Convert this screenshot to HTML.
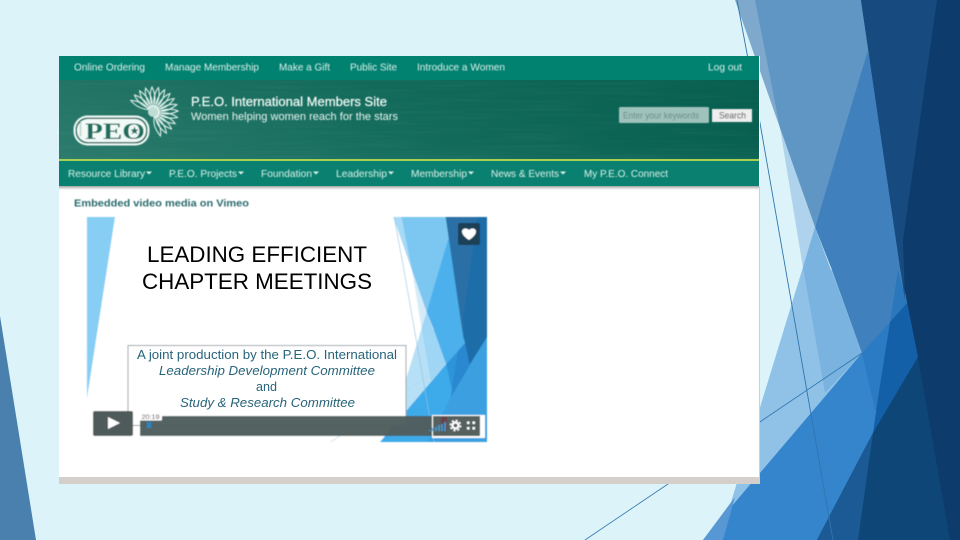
<!DOCTYPE html>
<html lang="en"><head><meta charset="utf-8"><title>P.E.O. Leadership Slide</title>
<style>
html,body{margin:0;padding:0;background:#DCF4F9;width:960px;height:540px;overflow:hidden}
svg{display:block;font-family:"Liberation Sans",Arial,sans-serif}
</style></head><body>
<svg width="960" height="540" viewBox="0 0 960 540" xmlns="http://www.w3.org/2000/svg">
<defs>
<filter id="b" x="-5%" y="-5%" width="110%" height="110%"><feGaussianBlur stdDeviation="0.42"/></filter>
<filter id="b2" x="-5%" y="-5%" width="110%" height="110%"><feGaussianBlur stdDeviation="0.45"/></filter>
<filter id="wave" x="0" y="0" width="100%" height="100%"><feTurbulence type="fractalNoise" baseFrequency="0.012 0.35" numOctaves="2" seed="4"/><feColorMatrix values="0 0 0 0 1  0 0 0 0 1  0 0 0 0 1  1.1 0 0 0 -0.45"/></filter>
<linearGradient id="ban" x1="0" y1="0" x2="1" y2="0"><stop offset="0" stop-color="#2A7A6B"/><stop offset=".45" stop-color="#156D5E"/><stop offset="1" stop-color="#075F50"/></linearGradient>
<linearGradient id="ban2" x1="0" y1="0" x2="0" y2="1"><stop offset="0" stop-color="#0A5F50" stop-opacity=".25"/><stop offset=".7" stop-color="#0A5F50" stop-opacity="0"/><stop offset="1" stop-color="#4A9484" stop-opacity=".12"/></linearGradient>
<linearGradient id="sh" x1="0" y1="0" x2="0" y2="1"><stop offset="0" stop-color="#555" stop-opacity=".55"/><stop offset="1" stop-color="#777" stop-opacity="0"/></linearGradient>
<path id="petal" d="M0-5C-3.600-12-3.400-20-1-25C1.400-20 3.600-12 0-5Z" fill="none" stroke="#EFFAF6" stroke-width="1"/>
</defs>

<rect width="960" height="540" fill="#DCF4F9"/>
<!-- slide decoration -->
<polygon points="0,316 36,540 0,540" fill="#4A80AE"/>
<polygon points="780,128 815,227 803,268" fill="#AFD3EC"/>
<polygon points="803,267 832,270 880,353 760,480 728,512" fill="#90C2E8"/>
<polygon points="803,267 815,227 862,353 825,393" fill="#7AB3E0"/>
<polygon points="735,0 756,0 790,150 780,128" fill="#7EA9CC"/>
<polygon points="755,0 875,0 875,30 815,227 780,128" fill="#6096C4"/>
<polygon points="868,50 910,270 910,330 878,398 862,353 832,270 815,227" fill="#4080BC"/>
<polygon points="703,540 862,353 880,353 890,433 840,540" fill="#3585CC"/>
<polygon points="723,540 735,497 703,540" fill="#5798D4"/>
<polygon points="862,353 891,321 885,410 875,410" fill="#2A7BC4"/>
<polygon points="898,270 907,303 890,322" fill="#2A78BB"/>
<polygon points="890,322 907,303 925,357 873,433 878,398" fill="#1460A8"/>
<polygon points="861,0 960,0 960,540 817,540 873,433 918,357 900,267" fill="#0C3B6C"/>
<polygon points="861,0 937,0 903,240 905,300 900,267" fill="#174B80"/>
<polygon points="918,357 950,540 817,540 873,433" fill="#0E4678"/>
<polygon points="873,433 858,540 817,540" fill="#1B5A94"/>
<polyline points="737,0 760,123 833,540" fill="none" stroke="#2E75B0" stroke-width=".9"/>
<line x1="585" y1="540" x2="862" y2="353" stroke="#2E75B0" stroke-width=".8"/>

<!-- screenshot card -->
<rect x="59" y="56" width="701" height="428" fill="#fff"/>
<rect x="759" y="186" width="1" height="292" fill="#CFCFCF"/>
<rect x="59" y="477" width="701" height="7" fill="#D5CFCB"/>
<rect x="59" y="56" width="700" height="24" fill="#018170"/>
<rect x="59" y="80" width="700" height="80" fill="url(#ban)"/>
<rect x="59" y="80" width="700" height="80" fill="url(#ban2)"/>
<rect x="59" y="80" width="700" height="80" filter="url(#wave)" opacity=".06"/>
<rect x="59" y="186" width="700" height="4" fill="url(#sh)"/>
<rect x="59" y="161" width="700" height="25" fill="#0A8170"/>
<rect x="59" y="159" width="700" height="2" fill="#A8D050"/>

<g filter="url(#b)">
<g fill="#DDF2EC" font-size="10.5">
<text x="74" y="70.5" textLength="71" lengthAdjust="spacingAndGlyphs">Online Ordering</text>
<text x="165" y="70.5" textLength="94" lengthAdjust="spacingAndGlyphs">Manage Membership</text>
<text x="279" y="70.5" textLength="51" lengthAdjust="spacingAndGlyphs">Make a Gift</text>
<text x="350" y="70.5" textLength="47" lengthAdjust="spacingAndGlyphs">Public Site</text>
<text x="417" y="70.5" textLength="88" lengthAdjust="spacingAndGlyphs">Introduce a Women</text>
<text x="708" y="70.5" textLength="34" lengthAdjust="spacingAndGlyphs">Log out</text>
</g>
<text x="191" y="106" fill="#F2FAF7" font-size="12.5" textLength="196" lengthAdjust="spacingAndGlyphs" stroke="#F2FAF7" stroke-width=".25">P.E.O. International Members Site</text>
<text x="191" y="120" fill="#EAF6F2" font-size="11" textLength="207" lengthAdjust="spacingAndGlyphs">Women helping women reach for the stars</text>

<rect x="619" y="107" width="90" height="16" rx="1.5" fill="#9FC3BC"/>
<text x="623" y="118.5" fill="#688B85" font-size="9.5" textLength="76" lengthAdjust="spacingAndGlyphs">Enter your keywords</text>
<rect x="712" y="109" width="40" height="13" fill="#EEEEEE"/>
<text x="719" y="118.5" fill="#444" font-size="9.5" textLength="27" lengthAdjust="spacingAndGlyphs">Search</text>

<g fill="#DDF2EC" font-size="10.5">
<text x="68" y="177" textLength="77" lengthAdjust="spacingAndGlyphs">Resource Library</text>
<text x="169" y="177" textLength="68" lengthAdjust="spacingAndGlyphs">P.E.O. Projects</text>
<text x="261" y="177" textLength="51" lengthAdjust="spacingAndGlyphs">Foundation</text>
<text x="336" y="177" textLength="51" lengthAdjust="spacingAndGlyphs">Leadership</text>
<text x="411" y="177" textLength="56" lengthAdjust="spacingAndGlyphs">Membership</text>
<text x="491" y="177" textLength="68" lengthAdjust="spacingAndGlyphs">News &amp; Events</text>
<text x="584" y="177" textLength="84" lengthAdjust="spacingAndGlyphs">My P.E.O. Connect</text>
<path d="M146 171.5h6l-3 3zM238 171.5h6l-3 3zM313 171.5h6l-3 3zM388 171.5h6l-3 3zM468 171.5h6l-3 3zM560 171.5h6l-3 3z"/>
</g>
<text x="74" y="206.500" fill="#2B6A6C" font-size="10.5" font-weight="bold" textLength="175" lengthAdjust="spacingAndGlyphs">Embedded video media on Vimeo</text>
</g>

<!-- logo -->
<g filter="url(#b)">
<g transform="translate(153 112)">
<use href="#petal" transform="rotate(-60)"/><use href="#petal" transform="rotate(-45)"/><use href="#petal" transform="rotate(-30)"/><use href="#petal" transform="rotate(-15)"/><use href="#petal"/><use href="#petal" transform="rotate(15)"/><use href="#petal" transform="rotate(30)"/><use href="#petal" transform="rotate(45)"/><use href="#petal" transform="rotate(60)"/><use href="#petal" transform="rotate(75)"/><use href="#petal" transform="rotate(90)"/><use href="#petal" transform="rotate(105)"/><use href="#petal" transform="rotate(120)"/><use href="#petal" transform="rotate(135)"/><use href="#petal" transform="rotate(150)"/><use href="#petal" transform="rotate(165)"/>
<circle r="5" fill="#BFDDD4"/>
</g>
<rect x="73.500" y="115.500" width="76" height="30" rx="14" fill="#F2FAF7"/>
<rect x="75.500" y="117.500" width="72" height="26" rx="12" fill="#1B6E60"/>
<rect x="77" y="119" width="69" height="23" rx="11" fill="#F2FAF7"/>
<text x="85" y="139" font-family="'Liberation Serif',serif" font-weight="bold" font-size="23" fill="#1F6D5F" textLength="60" lengthAdjust="spacingAndGlyphs">PEO</text>
<ellipse cx="134.500" cy="131" rx="5" ry="6.500" fill="#F2FAF7"/>
<path d="M134.500 126.500l1.200 3h3l-2.400 1.900 1 3-2.800-1.800-2.800 1.800 1-3-2.400-1.900h3z" fill="#1F6D5F"/>
<path d="M80.500 123v14" stroke="#6A9C90" stroke-width="1.500" stroke-dasharray="1 1"/>
</g>

<!-- video -->
<g filter="url(#b2)">
<rect x="87" y="217" width="400" height="225" fill="#fff"/>
<polygon points="87,217 115,217 87,398" fill="#87CEF5"/>
<g transform="translate(87 217) scale(.41667)" >
<polygon points="780,128 815,227 803,268" fill="#D5ECF8"/>
<polygon points="803,267 832,270 880,353 760,480 728,512" fill="#B7E0F7"/>
<polygon points="803,267 815,227 862,353 825,393" fill="#9FD6F5"/>
<polygon points="735,0 756,0 790,150 780,128" fill="#A6DAF7"/>
<polygon points="755,0 875,0 875,30 815,227 780,128" fill="#7CC6F2"/>
<polygon points="868,50 910,270 910,330 878,398 862,353 832,270 815,227" fill="#4BB0EC"/>
<polygon points="703,540 862,353 880,353 890,433 840,540" fill="#3CAAEA"/>
<polygon points="862,353 891,321 885,410 875,410" fill="#2F94DA"/>
<polygon points="890,322 907,303 925,357 873,433 878,398" fill="#2A88D0"/>
<polygon points="861,0 960,0 960,540 817,540 873,433 918,357 900,267" fill="#3A9FE0"/>
<polygon points="861,0 960,0 960,288 918,355 900,267" fill="#1F6DA8"/>
<polygon points="861,0 937,0 903,240 905,300 900,267" fill="#2C6FA6"/>
<polyline points="737,0 760,123 833,540" fill="none" stroke="#8CC0DC" stroke-width="1.500"/>
<line x1="585" y1="540" x2="862" y2="353" stroke="#B0D5E8" stroke-width="1.500"/>
</g>
<rect x="128" y="345.500" width="278" height="80" fill="#fff" stroke="#9A9FA3" stroke-width="1"/>
<rect x="140" y="416" width="342" height="20" fill="#4F5D5D" fill-opacity=".97"/>
<rect x="93" y="411" width="40" height="25" rx="2" fill="#505A5A"/>
<polygon points="108,417 120,423 108,429" fill="#fff"/>
<rect x="139" y="412" width="23" height="8.500" rx="1" fill="#fff"/>
<text x="141.500" y="418.800" font-size="6.500" fill="#333" textLength="18" lengthAdjust="spacingAndGlyphs">20:19</text>
<rect x="147" y="422" width="4" height="6" fill="#2488C8"/>
<rect x="432" y="415" width="53" height="23" fill="#fff"/>
<rect x="433" y="416" width="47" height="20" fill="#55605F"/>
<rect x="441" y="417" width="6" height="13" fill="#6B3F4A"/>
<path d="M430 431v-1M433 431v-3M436 431v-4M439 431v-6M442 431v-7M445 431v-9" stroke="#3FA0DA" stroke-width="1.600"/>
<circle cx="455.500" cy="425.500" r="3" fill="none" stroke="#fff" stroke-width="2.200"/>
<circle cx="455.500" cy="425.500" r="5" fill="none" stroke="#fff" stroke-width="1.600" stroke-dasharray="2 1.930"/>
<path d="M467 421.500h2.500v2.500H467zM472.500 421.500h2.500v2.500h-2.500zM467 427h2.500v2.500H467zM472.500 427h2.500v2.500h-2.500z" fill="#fff"/>
<rect x="458" y="223" width="22" height="22" rx="2" fill="#1D3F57"/>
<path d="M469 240C463.500 236.500 462 233.500 462 231.500C462 228 467 227.500 469 230C471 227.500 476 228 476 231.500C476 233.500 474.500 236.500 469 240Z" fill="#fff"/>
</g>
<g style="filter:blur(.25px)">
<text x="147" y="262" font-size="22" fill="#000" textLength="220" lengthAdjust="spacingAndGlyphs">LEADING EFFICIENT</text>
<text x="142" y="289" font-size="22" fill="#000" textLength="230" lengthAdjust="spacingAndGlyphs">CHAPTER MEETINGS</text>
<g fill="#27647A" font-size="12.500">
<text x="137" y="359" textLength="260" lengthAdjust="spacingAndGlyphs">A joint production by the P.E.O. International</text>
<text x="159" y="375" font-style="italic" textLength="216" lengthAdjust="spacingAndGlyphs">Leadership Development Committee</text>
<text x="256" y="391" textLength="21" lengthAdjust="spacingAndGlyphs">and</text>
<text x="180" y="407" font-style="italic" textLength="175" lengthAdjust="spacingAndGlyphs">Study &amp; Research Committee</text>
</g>
</g>
</svg>
</body></html>
